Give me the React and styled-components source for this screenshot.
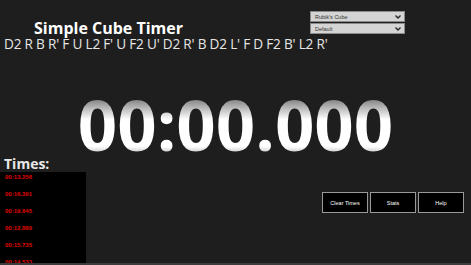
import React from "react";
import styled, { createGlobalStyle } from "styled-components";

const Global = createGlobalStyle`
  html, body { margin: 0; padding: 0; background: #1e1e1e; }
  body { font-family: "Open Sans", "Noto Sans", sans-serif; overflow: hidden; }
`;

const Page = styled.div`
  width: 471px;
  height: 263px;
  background: #1e1e1e;
  border-bottom: 2px solid #3c3c3c;
  display: flex;
  flex-direction: column;
  overflow: hidden;
`;

const Header = styled.header`
  display: flex;
  justify-content: space-between;
  align-items: flex-start;
  height: 37px;
  padding: 11px 66px 0 34px;
  box-sizing: border-box;
`;

const Title = styled.h1`
  margin: 9px 0 0;
  font-size: 16px;
  line-height: 16px;
  font-weight: 700;
  color: #ffffff;
`;

const SelectStack = styled.div`
  display: flex;
  flex-direction: column;
  gap: 1px;
`;

const Select = styled.div`
  width: 95px;
  height: 11px;
  box-sizing: border-box;
  background: #d4d4d4;
  border: 1px solid #8a8a8a;
  display: flex;
  align-items: center;
  justify-content: space-between;
  padding: 0 3px 0 4px;
  font-family: "Liberation Sans", Arial, sans-serif;
  font-size: 5.5px;
  color: #333;
`;

const Scramble = styled.div`
  padding-left: 4px;
  font-size: 13.6px;
  line-height: 14px;
  font-weight: 400;
  color: #e6e6e6;
  white-space: nowrap;
  letter-spacing: -0.2px;
`;

const TimerArea = styled.div`
  flex: 1;
  min-height: 0;
  display: flex;
  justify-content: center;
  align-items: flex-start;
  padding-top: 45px;
`;

const TimerText = styled.div`
  font-size: 69px;
  line-height: 56px;
  font-weight: 700;
  background: linear-gradient(to bottom, #8a8a8a 8%, #ffffff 42%, #ffffff 90%, #d0d0d0 100%);
  -webkit-background-clip: text;
  background-clip: text;
  color: transparent;
`;

const Bottom = styled.div`
  display: flex;
  align-items: flex-start;
  justify-content: space-between;
  height: 108px;
  flex-shrink: 0;
  padding-right: 7px;
`;

const TimesColumn = styled.div`
  display: flex;
  flex-direction: column;
  width: 86px;
  height: 100%;
`;

const TimesLabel = styled.div`
  padding-left: 4px;
  font-size: 14px;
  line-height: 17px;
  font-weight: 700;
  color: #e8e8e8;
  height: 17px;
`;

const TimesList = styled.ul`
  flex: 1;
  margin: 0;
  padding: 1px 0 0 5px;
  list-style: none;
  background: #000;
  overflow: hidden;
`;

const TimeItem = styled.li`
  font-family: "Liberation Sans", Arial, sans-serif;
  font-size: 6px;
  line-height: 8px;
  height: 17px;
  font-weight: 700;
  color: #e00000;
`;

const Buttons = styled.div`
  display: flex;
  gap: 2px;
  margin-top: 37px;
`;

const Button = styled.button`
  width: 46px;
  height: 21px;
  box-sizing: border-box;
  background: #000;
  border: 1px solid #9a9a9a;
  color: #fff;
  font-family: "Liberation Sans", Arial, sans-serif;
  font-size: 5.5px;
  padding: 0;
`;

const Chevron = () => (
  <svg width="6" height="4" viewBox="0 0 6 4">
    <path d="M0.5 0.5 L3 3 L5.5 0.5" stroke="#222" strokeWidth="1.3" fill="none" />
  </svg>
);

const times = ["00:13.256", "00:16.391", "00:19.845", "00:12.889", "00:15.735", "00:14.533"];

export default function App() {
  return (
    <Page>
      <Global />
      <Header>
        <Title>Simple Cube Timer</Title>
        <SelectStack>
          <Select>Rubik's Cube<Chevron /></Select>
          <Select>Default<Chevron /></Select>
        </SelectStack>
      </Header>
      <Scramble>D2 R B R' F U L2 F' U F2 U' D2 R' B D2 L' F D F2 B' L2 R'</Scramble>
      <TimerArea>
        <TimerText>00:00.000</TimerText>
      </TimerArea>
      <Bottom>
        <TimesColumn>
          <TimesLabel>Times:</TimesLabel>
          <TimesList>
            {times.map((t) => (
              <TimeItem key={t}>{t}</TimeItem>
            ))}
          </TimesList>
        </TimesColumn>
        <Buttons>
          <Button>Clear Times</Button>
          <Button>Stats</Button>
          <Button>Help</Button>
        </Buttons>
      </Bottom>
    </Page>
  );
}
